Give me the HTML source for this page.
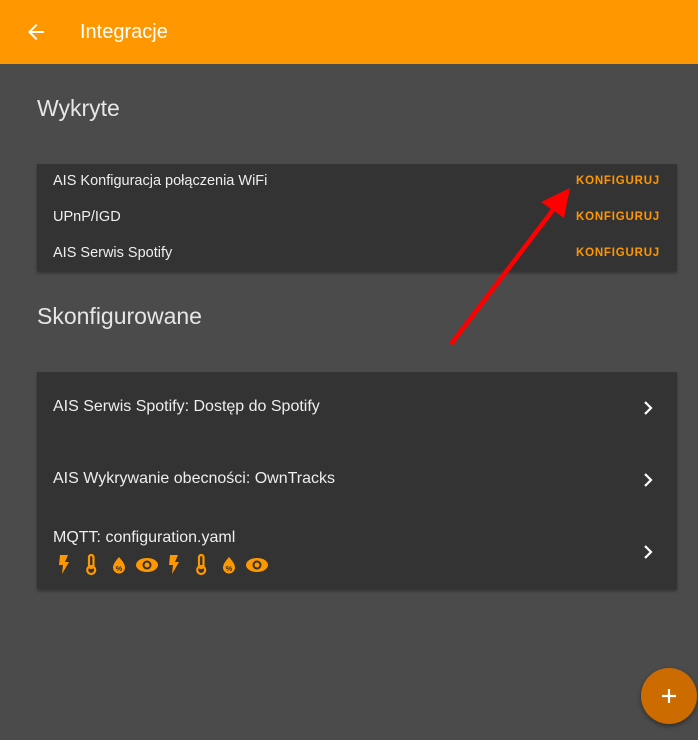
<!DOCTYPE html>
<html><head><meta charset="utf-8"><style>
*{margin:0;padding:0;box-sizing:border-box}
body{width:698px;height:740px;background:#4b4b4b;font-family:"Liberation Sans",sans-serif;position:relative;overflow:hidden;color:#e8e8e8}
.hdr{position:absolute;left:0;top:0;width:698px;height:64px;background:#ff9800;color:#fff}
.hdr .t{position:absolute;left:80px;top:21px;font-size:20px}
h2{position:absolute;left:37px;font-size:23px;font-weight:normal;color:#e6e6e6}
.card{position:absolute;left:37px;width:640px;background:#333;box-shadow:0 2px 3px rgba(0,0,0,.35)}
.r{position:absolute;left:16px;font-size:14.5px;color:#eee}
.k{position:absolute;right:17px;font-size:11.5px;font-weight:bold;letter-spacing:0.8px;color:#ff9800}
.r2{position:absolute;left:16px;font-size:16px;color:#eee}
.chev{position:absolute;right:22px}
.fab{position:absolute;left:641px;top:668px;width:56px;height:56px;border-radius:50%;background:#cc6c00;box-shadow:0 2px 5px rgba(0,0,0,.4)}
</style></head><body>
<div class="hdr">
<svg style="position:absolute;left:24px;top:20px" width="24" height="24" viewBox="0 0 24 24"><path d="M20 11H7.8l5.6-5.6L12 4l-8 8 8 8 1.4-1.4L7.8 13H20z" fill="#fff"/></svg>
<div class="t">Integracje</div></div>
<h2 style="top:95px">Wykryte</h2>
<div class="card" style="top:164px;height:107px">
<div class="r" style="top:9px">AIS Konfiguracja połączenia WiFi</div><div class="k" style="top:11px">KONFIGURUJ</div>
<div class="r" style="top:45px">UPnP/IGD</div><div class="k" style="top:47px">KONFIGURUJ</div>
<div class="r" style="top:81px">AIS Serwis Spotify</div><div class="k" style="top:83px">KONFIGURUJ</div>
</div>
<h2 style="top:303px">Skonfigurowane</h2>
<div class="card" style="top:372px;height:217px">
<div class="r2" style="top:26px">AIS Serwis Spotify: Dostęp do Spotify</div>
<div class="r2" style="top:98px">AIS Wykrywanie obecności: OwnTracks</div>
<div class="r2" style="top:157px">MQTT: configuration.yaml</div>
<svg class="chev" style="top:28px" width="14" height="16" viewBox="0 0 14 16"><path d="M4 2l6 6-6 6" stroke="#fff" stroke-width="2.2" fill="none"/></svg>
<svg class="chev" style="top:100px" width="14" height="16" viewBox="0 0 14 16"><path d="M4 2l6 6-6 6" stroke="#fff" stroke-width="2.2" fill="none"/></svg>
<svg class="chev" style="top:172px" width="14" height="16" viewBox="0 0 14 16"><path d="M4 2l6 6-6 6" stroke="#fff" stroke-width="2.2" fill="none"/></svg>
<svg style="position:absolute;left:16px;top:181px" width="240" height="24" viewBox="0 0 240 24" fill="#ff9800">
<g id="a"><path d="M7 2h8l-3 7h4l-7 12 1-9H6z"/>
<rect x="36" y="2" width="4.5" height="13" rx="2.2" fill="none" stroke="#ff9800" stroke-width="2.2"/><circle cx="38.2" cy="17" r="4" fill="none" stroke="#ff9800" stroke-width="2.2"/>
<path d="M66 4c-3.5 4-6 7.5-6 10.5a6 6 0 0 0 12 0c0-3-2.5-6.5-6-10.5z"/><text x="62.6" y="18" font-size="7.5" fill="#333" font-weight="bold">%</text>
<ellipse cx="94" cy="12" rx="11" ry="7"/><circle cx="94" cy="12" r="4.5" fill="#333"/><circle cx="94" cy="12" r="2.5" fill="#ff9800"/></g>
<use href="#a" x="110"/>
</svg>
</div>
<svg style="position:absolute;left:0;top:0" width="698" height="740"><line x1="451" y1="344" x2="556" y2="206" stroke="#f00" stroke-width="4.5"/><polygon points="570,188 541,202 564,218" fill="#f00"/></svg>
<div class="fab"><svg style="position:absolute;left:19px;top:19px" width="18" height="18" viewBox="0 0 18 18"><path d="M9 2v14M2 9h14" stroke="#fff" stroke-width="2.2"/></svg></div>
</body></html>
